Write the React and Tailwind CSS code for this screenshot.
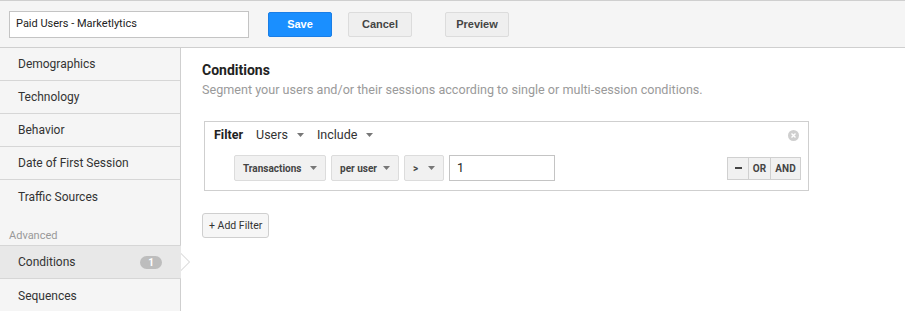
import React from "react";

const Caret = ({ className = "" }) => (
  <svg width="7" height="4" viewBox="0 0 7 4" className={className}>
    <path d="M0 0 L7 0 L3.5 4 Z" fill="#777" />
  </svg>
);

const SideItem = ({ label, border = true }) => (
  <div
    className={`h-[33px] flex items-center pl-[18px] text-[12px] text-[#333] ${
      border ? "border-b border-[#d6d6d6]" : ""
    }`}
  >
    {label}
  </div>
);

const SelBtn = ({ label, w }) => (
  <div
    className="h-[26px] flex items-center justify-between pl-[8px] pr-[8px] bg-[#f1f1f1] border border-[#dcdcdc] rounded-[2px] text-[10px] font-bold text-[#444] whitespace-nowrap"
    style={{ width: w }}
  >
    <span>{label}</span>
    <Caret />
  </div>
);

export default function App() {
  return (
    <div className="w-[905px] h-[311px] overflow-hidden bg-white border-t border-[#cfcfcf] font-['Roboto',sans-serif]">
      {/* Header */}
      <div className="h-[47px] bg-[#f5f5f5] border-b border-[#cfcfcf] flex items-center pl-[9px]">
        <div className="w-[240px] h-[27px] bg-white border border-[#c4c4c4] flex items-center pl-[6px] text-[11px] text-[#222]">
          Paid Users - Marketlytics
        </div>
        <button className="ml-[19px] w-[64px] h-[25px] bg-[#1a8fff] border border-[#1a7ee6] rounded-[2px] text-white text-[11px] font-bold font-['Liberation_Sans',Arial,sans-serif]">
          Save
        </button>
        <button className="ml-[16px] w-[64px] h-[25px] bg-[#efefef] border border-[#dcdcdc] rounded-[2px] text-[#444] text-[11px] font-bold font-['Liberation_Sans',Arial,sans-serif]">
          Cancel
        </button>
        <button className="ml-[33px] w-[64px] h-[25px] bg-[#efefef] border border-[#dcdcdc] rounded-[2px] text-[#444] text-[11px] font-bold font-['Liberation_Sans',Arial,sans-serif]">
          Preview
        </button>
      </div>

      <div className="flex h-[263px]">
        {/* Sidebar */}
        <div className="w-[181px] shrink-0 bg-[#f5f5f5] border-r border-[#cfcfcf] relative">
          <SideItem label="Demographics" />
          <SideItem label="Technology" />
          <SideItem label="Behavior" />
          <SideItem label="Date of First Session" />
          <SideItem label="Traffic Sources" border={false} />
          <div className="h-[32px] flex items-end pb-[1px] pl-[9px] text-[11px] text-[#999]">
            Advanced
          </div>
          <div className="relative h-[34px] flex items-center justify-between pl-[18px] pr-[19px] text-[12px] text-[#333] bg-[#e8e8e8] border-y border-[#d6d6d6] mr-[-1px]">
            <span>Conditions</span>
            <span className="w-[22px] h-[13px] rounded-full bg-[#bdbdbd] text-white text-[10px] font-bold flex items-center justify-center">
              1
            </span>
            <span className="absolute right-[-9px] top-[7px] w-0 h-0 border-y-[9px] border-y-transparent border-l-[9px] border-l-[#cfcfcf]" />
            <span className="absolute right-[-8px] top-[8px] w-0 h-0 border-y-[8px] border-y-transparent border-l-[8px] border-l-white" />
          </div>
          <SideItem label="Sequences" border={false} />
        </div>

        {/* Main */}
        <div className="flex-1 pl-[21px] pt-[13px]">
          <div className="text-[14px] font-bold text-[#222] leading-[18px]">Conditions</div>
          <div className="mt-[3px] text-[12.6px] text-[#9a9a9a] leading-[16px] whitespace-nowrap">
            Segment your users and/or their sessions according to single or multi-session conditions.
          </div>

          <div className="mt-[23px] ml-[2px] w-[605px] h-[70px] border border-[#cfcfcf] relative">
            <div className="flex items-center h-[26px] pl-[9px] text-[12.5px] text-[#333]">
              <span className="font-bold text-[#222]">Filter</span>
              <span className="ml-[13px]">Users</span>
              <Caret className="ml-[9px]" />
              <span className="ml-[13px]">Include</span>
              <Caret className="ml-[9px]" />
            </div>
            <svg className="absolute right-[9px] top-[8px]" width="11" height="11" viewBox="0 0 11 11">
              <circle cx="5.5" cy="5.5" r="5.5" fill="#cfcfcf" />
              <path d="M3.5 3.5 L7.5 7.5 M7.5 3.5 L3.5 7.5" stroke="white" strokeWidth="1.4" />
            </svg>
            <div className="flex items-center mt-[7px] pl-[29px]">
              <SelBtn label="Transactions" w={92} />
              <div className="ml-[5px]"><SelBtn label="per user" w={68} /></div>
              <div className="ml-[5px]"><SelBtn label=">" w={40} /></div>
              <div className="ml-[5px] w-[106px] h-[26px] border border-[#c4c4c4] bg-white flex items-center pl-[7px] text-[12.5px] text-[#222]">
                1
              </div>
              <div className="ml-auto mr-[7px] flex h-[23px] border border-[#d0d0d0] text-[10px] font-bold text-[#444] bg-[#f1f1f1]">
                <div className="w-[21px] flex items-center justify-center border-r border-[#d0d0d0]">
                  <span className="w-[7px] h-[2px] bg-[#444]" />
                </div>
                <div className="w-[22px] flex items-center justify-center border-r border-[#d0d0d0]">OR</div>
                <div className="w-[29px] flex items-center justify-center">AND</div>
              </div>
            </div>
          </div>

          <button className="mt-[22px] h-[25px] px-[6px] bg-[#f6f6f6] border border-[#cfcfcf] rounded-[3px] text-[10.5px] text-[#333] flex items-center whitespace-nowrap">
            + Add Filter
          </button>
        </div>
      </div>
    </div>
  );
}
